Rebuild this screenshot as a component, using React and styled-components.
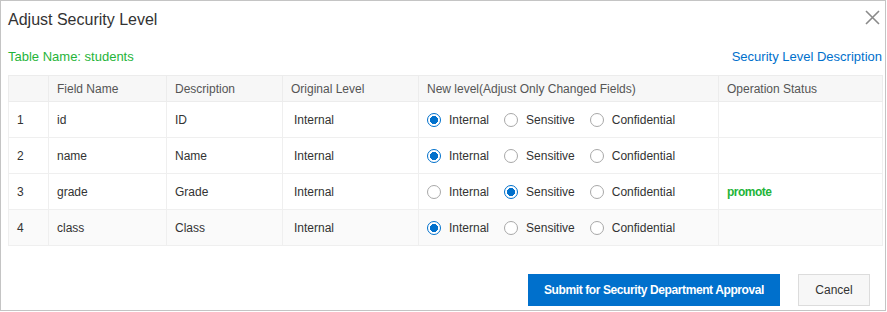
import React, { useState } from "react";
import styled, { createGlobalStyle } from "styled-components";

const GlobalStyle = createGlobalStyle`
  html, body {
    margin: 0;
    padding: 0;
    background: #fff;
  }
  body {
    font-family: "Liberation Sans", Arial, sans-serif;
    color: #333;
  }
`;

const LEVELS = ["Internal", "Sensitive", "Confidential"];

const initialRows = [
  { id: 1, field: "id", desc: "ID", original: "Internal", level: "Internal", status: "" },
  { id: 2, field: "name", desc: "Name", original: "Internal", level: "Internal", status: "" },
  { id: 3, field: "grade", desc: "Grade", original: "Internal", level: "Sensitive", status: "promote" },
  { id: 4, field: "class", desc: "Class", original: "Internal", level: "Internal", status: "" },
];

const App = () => {
  const [rows, setRows] = useState(initialRows);

  const changeLevel = (id, level) => {
    setRows(
      rows.map((r) => (r.id === id ? { ...r, level } : r))
    );
  };

  return (
    <>
      <GlobalStyle />
      <Dialog>
        <Header>
          <Title>Adjust Security Level</Title>
          <CloseButton aria-label="close">
            <svg width="15" height="15" viewBox="0 0 15 15">
              <path d="M1 1 L14 14 M14 1 L1 14" stroke="#8a8a8a" strokeWidth="1.6" />
            </svg>
          </CloseButton>
        </Header>
        <InfoRow>
          <TableName>Table Name: students</TableName>
          <DescLink>Security Level Description</DescLink>
        </InfoRow>
        <Table>
          <colgroup>
            <col style={{ width: 40 }} />
            <col style={{ width: 118 }} />
            <col style={{ width: 116 }} />
            <col style={{ width: 136 }} />
            <col style={{ width: 300 }} />
            <col style={{ width: 164 }} />
          </colgroup>
          <thead>
            <tr>
              <Th />
              <Th>Field Name</Th>
              <Th>Description</Th>
              <Th>Original Level</Th>
              <Th>New level(Adjust Only Changed Fields)</Th>
              <Th>Operation Status</Th>
            </tr>
          </thead>
          <tbody>
            {rows.map((r, i) => (
              <Row key={r.id} $hover={i === rows.length - 1}>
                <Td>{r.id}</Td>
                <Td>{r.field}</Td>
                <Td>{r.desc}</Td>
                <Td $pad={11}>{r.original}</Td>
                <Td>
                  <RadioGroup>
                    {LEVELS.map((lv) => (
                      <RadioLabel key={lv} onClick={() => changeLevel(r.id, lv)}>
                        <RadioCircle $checked={r.level === lv} />
                        {lv}
                      </RadioLabel>
                    ))}
                  </RadioGroup>
                </Td>
                <Td>{r.status && <Status>{r.status}</Status>}</Td>
              </Row>
            ))}
          </tbody>
        </Table>
        <Footer>
          <PrimaryButton>Submit for Security Department Approval</PrimaryButton>
          <NormalButton>Cancel</NormalButton>
        </Footer>
      </Dialog>
    </>
  );
};

export default App;

const Dialog = styled.div`
  width: 886px;
  height: 311px;
  box-sizing: border-box;
  border: 1px solid #c4c4c4;
  padding: 0 3px 0 7px;
  background: #fff;
  display: flex;
  flex-direction: column;
`;

const Header = styled.div`
  height: 36px;
  display: flex;
  align-items: center;
  justify-content: space-between;
`;

const Title = styled.div`
  font-size: 16px;
  color: #333;
  margin-top: 1px;
`;

const CloseButton = styled.button`
  border: none;
  background: none;
  padding: 0;
  margin-right: 2px;
  margin-top: -3px;
  width: 15px;
  height: 15px;
  display: flex;
  cursor: pointer;
`;

const InfoRow = styled.div`
  height: 38px;
  display: flex;
  align-items: center;
  justify-content: space-between;
  font-size: 13px;
  padding-top: 1px;
  box-sizing: border-box;
`;

const TableName = styled.span`
  color: #1fb43a;
`;

const DescLink = styled.a`
  color: #0070cc;
  cursor: pointer;
`;

const Table = styled.table`
  width: 874px;
  table-layout: fixed;
  border-collapse: collapse;
  font-size: 12px;
`;

const Th = styled.th`
  height: 25px;
  padding: 0 8px;
  text-align: left;
  font-weight: normal;
  color: #555;
  background: #f7f7f7;
  border: 1px solid #ececec;
  white-space: nowrap;
`;

const Row = styled.tr`
  background: ${(p) => (p.$hover ? "#fafafa" : "#fff")};
`;

const Td = styled.td`
  height: 35px;
  padding: 0 8px 0 ${(p) => p.$pad || 8}px;
  color: #333;
  border: 1px solid #efefef;
  white-space: nowrap;
`;

const RadioGroup = styled.div`
  display: flex;
  align-items: center;
`;

const RadioLabel = styled.label`
  display: flex;
  align-items: center;
  gap: 8px;
  margin-right: 15px;
  cursor: pointer;
  color: #333;
`;

const RadioCircle = styled.span`
  width: 14px;
  height: 14px;
  box-sizing: border-box;
  border-radius: 50%;
  border: 1px solid ${(p) => (p.$checked ? "#0070cc" : "#a8a8a8")};
  background: ${(p) =>
    p.$checked
      ? "radial-gradient(circle, #0070cc 0, #0070cc 3.8px, #fff 4.3px)"
      : "#fff"};
`;

const Status = styled.span`
  color: #1fb43a;
  font-weight: bold;
  letter-spacing: -0.5px;
`;

const Footer = styled.div`
  display: flex;
  justify-content: flex-end;
  gap: 18px;
  margin-top: 28px;
  padding-right: 12px;
`;

const PrimaryButton = styled.button`
  width: 252px;
  height: 32px;
  border: none;
  background: #0070cc;
  color: #fff;
  font-family: "Liberation Sans", Arial, sans-serif;
  font-size: 12px;
  font-weight: bold;
  letter-spacing: -0.4px;
  cursor: pointer;
`;

const NormalButton = styled.button`
  width: 72px;
  height: 32px;
  border: 1px solid #dcdcdc;
  background: #f7f7f7;
  color: #333;
  font-family: "Liberation Sans", Arial, sans-serif;
  font-size: 12px;
  cursor: pointer;
`;
